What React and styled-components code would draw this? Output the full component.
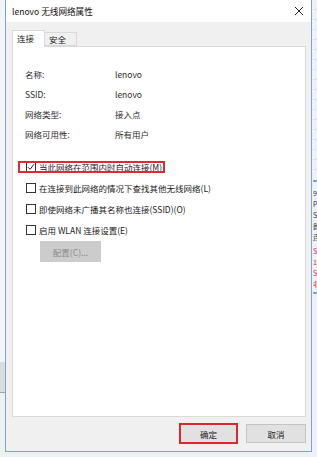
import React from "react";
import styled, { createGlobalStyle } from "styled-components";

const Global = createGlobalStyle`
  html, body { margin: 0; padding: 0; }
  body {
    background: #e9edf1;
    font-family: "Noto Sans CJK SC", "Liberation Sans", sans-serif;
    -webkit-font-smoothing: antialiased;
  }
`;

const Page = styled.div`
  width: 317px;
  height: 457px;
  display: flex;
  overflow: hidden;
  background: #eef1f4;
`;

const Gutter = styled.div`
  width: 5px;
  flex: none;
  display: flex;
  flex-direction: column;
`;

const GutterBlock = styled.div`
  height: ${(p) => p.h}px;
  background: ${(p) => p.bg};
  border-bottom: ${(p) => (p.line ? `1px solid ${p.line}` : "none")};
`;

const Window = styled.div`
  width: 307px;
  height: 452px;
  flex: none;
  box-sizing: border-box;
  border: 1px solid #7aa3cf;
  border-top: none;
  display: flex;
  flex-direction: column;
  background: #f0f0f0;
  font-size: 8.5px;
  color: #1a1a1a;
`;

const TitleBar = styled.div`
  height: 22px;
  flex: none;
  background: #ffffff;
  display: flex;
  align-items: center;
  justify-content: space-between;
  padding: 0 6px 0 6px;
`;

const Title = styled.span`
  font-size: 8.6px;
  color: #111;
`;

const Close = styled.svg`
  width: 10px;
  height: 10px;
  margin-right: 1px;
`;

const Body = styled.div`
  flex: 1;
  display: flex;
  flex-direction: column;
  padding: 8px 5px 0 6px;
`;

const Tabs = styled.div`
  display: flex;
  align-items: flex-end;
  height: 16px;
  position: relative;
  z-index: 1;
`;

const Tab = styled.div`
  box-sizing: border-box;
  height: ${(p) => (p.active ? 17 : 14)}px;
  width: ${(p) => (p.active ? 33 : 32)}px;
  margin-bottom: ${(p) => (p.active ? -1 : 0)}px;
  background: ${(p) => (p.active ? "#ffffff" : "#f0f0f0")};
  border: 1px solid #d9d9d9;
  border-bottom: ${(p) => (p.active ? "none" : "1px solid #d9d9d9")};
  border-left: ${(p) => (p.first ? "1px solid #d9d9d9" : "none")};
  display: flex;
  align-items: center;
  padding-left: 4px;
  padding-bottom: ${(p) => (p.active ? 2 : 0)}px;
`;

const Panel = styled.div`
  height: 371px;
  box-sizing: border-box;
  background: #ffffff;
  border: 1px solid #d9d9d9;
  padding: 17px 12px 0 12px;
  display: flex;
  flex-direction: column;
`;

const InfoRow = styled.div`
  display: grid;
  grid-template-columns: 90px 1fr;
  height: 20px;
  align-items: center;
  color: #2b2b2b;
`;

const Checks = styled.div`
  margin-top: 12px;
  display: flex;
  flex-direction: column;
`;

const CheckRow = styled.label`
  position: relative;
  height: 21px;
  display: flex;
  align-items: center;
  gap: 3px;
  padding-left: 1px;
  color: #1a1a1a;
`;

const Box = styled.span`
  width: 10px;
  height: 10px;
  box-sizing: border-box;
  border: 1px solid #333333;
  background: #fff;
  flex: none;
  display: flex;
  align-items: center;
  justify-content: center;
`;

const Highlight = styled.span`
  position: absolute;
  left: -7px;
  top: 5px;
  width: 147px;
  height: 12px;
  border: 2px solid #e02a2f;
  box-sizing: border-box;
  pointer-events: none;
`;

const ConfigButton = styled.button`
  margin: 1px 0 0 15px;
  width: 61px;
  height: 21px;
  border: none;
  background: #cccccc;
  color: #8a8a8a;
  font: inherit;
  font-size: 8.5px;
  padding: 0;
`;

const Footer = styled.div`
  height: 34px;
  display: flex;
  justify-content: flex-end;
  align-items: flex-start;
  gap: 8px;
  padding-top: 6px;
  box-sizing: border-box;
`;

const Button = styled.button`
  width: ${(p) => (p.primary ? 59 : 60)}px;
  height: ${(p) => (p.primary ? 21 : 19)}px;
  margin-top: ${(p) => (p.primary ? 0 : 1)}px;
  box-sizing: border-box;
  background: #e1e1e1;
  border: ${(p) => (p.primary ? "2px solid #e0262b" : "1px solid #c4c4c4")};
  font: inherit;
  font-size: 8.5px;
  color: #1a1a1a;
  padding: 0;
`;

const Side = styled.div`
  flex: 1;
  display: flex;
  flex-direction: column;
  overflow: hidden;
  background: #eef2f6;
  font-family: "Noto Sans CJK SC", "Liberation Sans", sans-serif;
  font-size: 7px;
  line-height: 11px;
  padding-left: 1px;
`;

const SideLines = styled.div`
  height: 178px;
  background: repeating-linear-gradient(
    to bottom,
    #eef2f6 0px,
    #eef2f6 9px,
    #c9d3dd 9px,
    #c9d3dd 10px
  );
  opacity: 0.6;
`;

const SideRule = styled.div`
  height: 2px;
  background: #7fa6cc;
  margin: 2px 0 6px;
`;

const SideText = styled.div`
  white-space: nowrap;
  color: ${(p) => p.c || "#333"};
  height: ${(p) => p.h || 11}px;
  overflow: hidden;
`;

const Check = () => (
  <svg width="8" height="8" viewBox="0 0 8 8">
    <path d="M1 4.2 L3.1 6.3 L7 1.2" fill="none" stroke="#222" strokeWidth="1" />
  </svg>
);

export default function App() {
  const info = [
    ["名称:", "lenovo"],
    ["SSID:", "lenovo"],
    ["网络类型:", "接入点"],
    ["网络可用性:", "所有用户"],
  ];
  const checks = [
    { text: "当此网络在范围内时自动连接(M)", checked: true, mark: true },
    { text: "在连接到此网络的情况下查找其他无线网络(L)" },
    { text: "即使网络未广播其名称也连接(SSID)(O)" },
    { text: "启用 WLAN 连接设置(E)" },
  ];
  return (
    <>
      <Global />
      <Page>
        <Gutter>
          <GutterBlock h={363} bg="#f3f5f7" />
          <GutterBlock h={30} bg="#d9dde1" line="#9aa4ae" />
          <GutterBlock h={64} bg="#eef1f4" />
        </Gutter>
        <Window>
          <TitleBar>
            <Title>lenovo 无线网络属性</Title>
            <Close viewBox="0 0 10 10">
              <path d="M1 1 L9 9 M9 1 L1 9" stroke="#222" strokeWidth="1" />
            </Close>
          </TitleBar>
          <Body>
            <Tabs>
              <Tab active first>连接</Tab>
              <Tab>安全</Tab>
            </Tabs>
            <Panel>
              {info.map(([k, v]) => (
                <InfoRow key={k}>
                  <span>{k}</span>
                  <span>{v}</span>
                </InfoRow>
              ))}
              <Checks>
                {checks.map((c) => (
                  <CheckRow key={c.text}>
                    <Box>{c.checked && <Check />}</Box>
                    <span>{c.text}</span>
                    {c.mark && <Highlight />}
                  </CheckRow>
                ))}
              </Checks>
              <div>
                <ConfigButton disabled>配置(C)...</ConfigButton>
              </div>
            </Panel>
            <Footer>
              <Button primary>确定</Button>
              <Button>取消</Button>
            </Footer>
          </Body>
        </Window>
        <Side>
          <SideLines />
          <SideRule />
          <SideText>9</SideText>
          <SideText>P</SideText>
          <SideText>S</SideText>
          <SideText>即</SideText>
          <SideText h={14}>连</SideText>
          <SideText c="#d0303a">S</SideText>
          <SideText c="#d0303a">1</SideText>
          <SideText c="#d0303a">S</SideText>
          <SideText c="#d0303a">非</SideText>
          <SideRule />
        </Side>
      </Page>
    </>
  );
}
